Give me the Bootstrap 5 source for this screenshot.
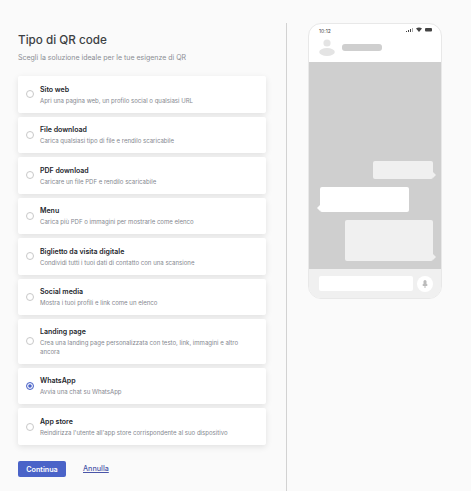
<!DOCTYPE html>
<html lang="it">
<head>
    <meta charset="UTF-8">
    <meta name="viewport" content="width=device-width, initial-scale=1.0">
    <title>Tipo di QR code</title>
    <link href="https://cdn.jsdelivr.net/npm/bootstrap@5.3.0/dist/css/bootstrap.min.css" rel="stylesheet">
    <style>
        body {
            background-color: #fafafa;
            font-family: "Inter", "Liberation Sans", sans-serif;
            height: 491px;
            overflow: hidden;
        }
        .left-pane {
            width: 287px;
            height: 468px;
            margin-top: 23px;
            padding: 9px 20px 0 18px;
            border-right: 1px solid #d2d2d2;
        }
        .page-title {
            font-size: 11.7px;
            font-weight: 500;
            line-height: 16px;
            color: #3c4043;
            margin: 0 0 5px;
        }
        .page-sub {
            font-size: 7px;
            line-height: 10px;
            color: #8a8d94;
            margin: 0 0 13px;
        }
        .type-list {
            gap: 4px;
        }
        .type-item {
            min-height: 36.5px;
            padding: 7px 8px;
            background-color: #fff;
            border-radius: 2px;
            box-shadow: 0 2px 6px rgba(0, 0, 0, .1);
            gap: 6px;
        }
        .type-radio {
            width: 8px;
            height: 8px;
            flex: none;
            border: 1px solid #c8c8c8;
            border-radius: 50%;
            background-color: #fff;
        }
        .type-radio.on {
            border-color: #4a63c8;
            box-shadow: inset 0 0 0 1.2px #fff, inset 0 0 0 4px #4a63c8;
        }
        .type-text {
            padding-top: 1px;
        }
        .type-name {
            font-size: 7px;
            font-weight: 600;
            line-height: 10px;
            color: #22252b;
            margin-bottom: 1px;
        }
        .type-desc {
            font-size: 6.05px;
            line-height: 9.4px;
            color: #85888f;
        }
        .form-actions {
            margin-top: 16px;
            gap: 17px;
        }
        .btn-go {
            width: 48px;
            height: 16px;
            padding: 1px 0 0;
            font-size: 7.2px;
            font-weight: 600;
            line-height: 15px;
            color: #fff;
            background-color: #4a63c8;
            border: 0;
            border-radius: 2px;
        }
        .link-cancel {
            font-size: 7.2px;
            font-weight: 500;
            color: #4a55a8;
            padding-top: 1px;
        }
        .phone {
            width: 134px;
            height: 276px;
            margin: 23px 0 0 21px;
            background-color: #fff;
            border: 1px solid #e8e8e8;
            border-radius: 13px;
            overflow: hidden;
        }
        .phone-status {
            height: 13px;
            padding: 3px 9px 0 10px;
            font-size: 5px;
            line-height: 8px;
            color: #444;
        }
        .phone-head {
            height: 25px;
            padding: 0 0 4px 10px;
            gap: 7px;
        }
        .head-name {
            width: 40px;
            height: 7px;
            border-radius: 3px;
            background-color: #cfcfcf;
        }
        .chat-area {
            height: 207px;
            background-color: #cfcfcf;
            padding: 99px 8px 0 8px;
        }
        .bubble {
            position: relative;
            border-radius: 2px;
        }
        .bubble::after {
            content: "";
            position: absolute;
            bottom: 1px;
            border-top: 3px solid transparent;
            border-bottom: 3px solid transparent;
        }
        .bubble-out {
            background-color: #f0f0f0;
            margin-left: auto;
        }
        .bubble-out::after {
            right: -3px;
            border-left: 3px solid #f0f0f0;
        }
        .bubble-in {
            background-color: #fff;
            margin-left: 3px;
        }
        .bubble-in::after {
            left: -3px;
            border-right: 3px solid #fff;
        }
        .bubble-a { width: 60px; height: 18px; margin-bottom: 8px; }
        .bubble-b { width: 89px; height: 25px; margin-bottom: 8px; }
        .bubble-c { width: 88px; height: 41px; }
        .phone-foot {
            height: 29px;
            padding: 0 8px 0 10px;
            background-color: #f0f0f0;
            gap: 4px;
        }
        .foot-input {
            width: 94px;
            height: 15px;
            border-radius: 2px;
            background-color: #fff;
        }
        .foot-mic {
            width: 16px;
            height: 16px;
            border-radius: 50%;
            background-color: #fff;
        }
    </style>
</head>
<body>
    <div class="d-flex">
        <div class="left-pane">
            <h1 class="page-title">Tipo di QR code</h1>
            <p class="page-sub">Scegli la soluzione ideale per le tue esigenze di QR</p>

            <div class="type-list d-flex flex-column">
                <div class="type-item d-flex align-items-center">
                    <span class="type-radio"></span>
                    <div class="type-text"><div class="type-name">Sito web</div><div class="type-desc">Apri una pagina web, un profilo social o qualsiasi URL</div></div>
                </div>
                <div class="type-item d-flex align-items-center">
                    <span class="type-radio"></span>
                    <div class="type-text"><div class="type-name">File download</div><div class="type-desc">Carica qualsiasi tipo di file e rendilo scaricabile</div></div>
                </div>
                <div class="type-item d-flex align-items-center">
                    <span class="type-radio"></span>
                    <div class="type-text"><div class="type-name">PDF download</div><div class="type-desc">Caricare un file PDF e rendilo scaricabile</div></div>
                </div>
                <div class="type-item d-flex align-items-center">
                    <span class="type-radio"></span>
                    <div class="type-text"><div class="type-name">Menu</div><div class="type-desc">Carica più PDF o immagini per mostrarle come elenco</div></div>
                </div>
                <div class="type-item d-flex align-items-center">
                    <span class="type-radio"></span>
                    <div class="type-text"><div class="type-name">Biglietto da visita digitale</div><div class="type-desc">Condividi tutti i tuoi dati di contatto con una scansione</div></div>
                </div>
                <div class="type-item d-flex align-items-center">
                    <span class="type-radio"></span>
                    <div class="type-text"><div class="type-name">Social media</div><div class="type-desc">Mostra i tuoi profili e link come un elenco</div></div>
                </div>
                <div class="type-item d-flex align-items-center">
                    <span class="type-radio"></span>
                    <div class="type-text"><div class="type-name">Landing page</div><div class="type-desc">Crea una landing page personalizzata con testo, link, immagini e altro ancora</div></div>
                </div>
                <div class="type-item d-flex align-items-center">
                    <span class="type-radio on"></span>
                    <div class="type-text"><div class="type-name">WhatsApp</div><div class="type-desc">Avvia una chat su WhatsApp</div></div>
                </div>
                <div class="type-item d-flex align-items-center">
                    <span class="type-radio"></span>
                    <div class="type-text"><div class="type-name">App store</div><div class="type-desc">Reindirizza l'utente all'app store corrispondente al suo dispositivo</div></div>
                </div>
            </div>

            <div class="form-actions d-flex align-items-center">
                <button type="button" class="btn btn-go">Continua</button>
                <a href="#" class="link-cancel">Annulla</a>
            </div>
        </div>

        <div class="phone flex-shrink-0">
            <div class="phone-status d-flex justify-content-between">
                <span>10:12</span>
                <svg width="26" height="6" viewBox="0 0 26 6">
                    <rect x="0" y="4" width="1" height="1" fill="#444"/>
                    <rect x="2" y="3" width="1" height="2" fill="#444"/>
                    <rect x="4" y="2" width="1" height="3" fill="#444"/>
                    <rect x="6" y="1" width="1" height="4" fill="#aaa"/>
                    <path d="M10 1.5q3-2 6 0l-3 3.5z" fill="#444"/>
                    <rect x="19" y="1" width="7" height="3.5" rx="1" fill="#444"/>
                </svg>
            </div>
            <div class="phone-head d-flex align-items-center">
                <svg width="16" height="17" viewBox="0 0 16 17">
                    <circle cx="8" cy="4" r="3.6" fill="#e4e4e4"/>
                    <ellipse cx="8" cy="13" rx="7.8" ry="4" fill="#e4e4e4"/>
                </svg>
                <div class="head-name"></div>
            </div>
            <div class="chat-area">
                <div class="bubble bubble-out bubble-a"></div>
                <div class="bubble bubble-in bubble-b"></div>
                <div class="bubble bubble-out bubble-c"></div>
            </div>
            <div class="phone-foot d-flex align-items-center">
                <div class="foot-input"></div>
                <div class="foot-mic d-flex align-items-center justify-content-center">
                    <svg width="6" height="8" viewBox="0 0 6 8">
                        <rect x="1.5" y="0" width="3" height="5" rx="1.5" fill="#bbb"/>
                        <rect x="0.5" y="4" width="5" height="2" rx="1" fill="#bbb"/>
                        <rect x="2.5" y="6" width="1" height="2" fill="#bbb"/>
                    </svg>
                </div>
            </div>
        </div>
    </div>

    <script src="https://cdn.jsdelivr.net/npm/bootstrap@5.3.0/dist/js/bootstrap.bundle.min.js"></script>
</body>
</html>
